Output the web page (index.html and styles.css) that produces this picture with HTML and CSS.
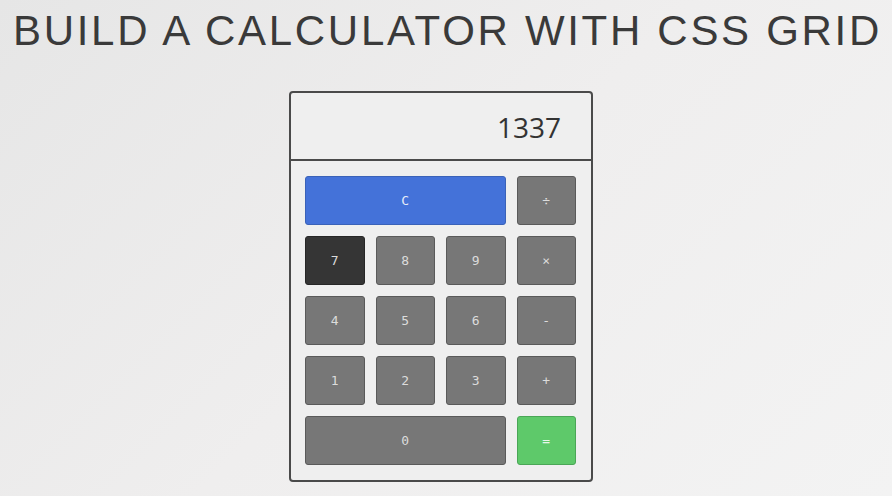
FILE: index.html
```html
<!DOCTYPE html>
<html>
<head>
<meta charset="utf-8">
<link rel="stylesheet" href="styles.css">
</head>
<body>
<h1 class="title">BUILD A CALCULATOR WITH CSS GRID</h1>
<div class="calc">
  <div class="display">1337</div>
  <div class="keys">
    <button class="key key-clear">C</button>
    <button class="key">÷</button>
    <button class="key key-active">7</button>
    <button class="key">8</button>
    <button class="key">9</button>
    <button class="key">×</button>
    <button class="key">4</button>
    <button class="key">5</button>
    <button class="key">6</button>
    <button class="key">-</button>
    <button class="key">1</button>
    <button class="key">2</button>
    <button class="key">3</button>
    <button class="key">+</button>
    <button class="key key-zero">0</button>
    <button class="key key-equals">=</button>
  </div>
</div>
</body>
</html>
```
FILE: styles.css
```css
html, body {
  margin: 0;
  padding: 0;
}
body {
  width: 892px;
  height: 496px;
  overflow: hidden;
  background: linear-gradient(135deg, #e6e6e6 0%, #efeeee 50%, #f3f3f3 100%);
  display: flex;
  flex-direction: column;
  align-items: center;
}
.title {
  margin: 9px 0 0 3px;
  font-family: "Liberation Sans", Arial, sans-serif;
  font-weight: normal;
  font-size: 42px;
  letter-spacing: 2.7px;
  line-height: 44px;
  color: #3a3a3a;
  white-space: nowrap;
}
.calc {
  margin-top: 38px;
  margin-right: 10px;
  width: 300px;
  border: 2px solid #4a4a4a;
  border-radius: 4px;
  background: #efefef;
}
.display {
  height: 68px;
  border-bottom: 2px solid #4a4a4a;
  font-family: "Open Sans", sans-serif;
  font-size: 28px;
  color: #333;
  display: flex;
  align-items: center;
  justify-content: flex-end;
  padding-right: 30px;
  padding-top: 2px;
  box-sizing: border-box;
}
.keys {
  display: grid;
  grid-template-columns: repeat(4, 1fr);
  grid-auto-rows: 49px;
  gap: 11px 11px;
  padding: 15px 15px 15px 14px;
}
.key {
  margin: 0;
  padding: 0;
  background: #777;
  border: 1px solid #5a5a5a;
  border-radius: 3px;
  color: #dcdcdc;
  font-family: "DejaVu Sans Mono", monospace;
  font-size: 13px;
}
.key-clear {
  grid-column: span 3;
  background: #4472d9;
  border-color: #3a62b8;
  color: #e6ecf8;
}
.key-active {
  background: #353535;
  border-color: #262626;
}
.key-zero {
  grid-column: span 3;
}
.key-equals {
  background: #5ec96a;
  border-color: #4aa656;
  color: #e8f6ea;
}
```
